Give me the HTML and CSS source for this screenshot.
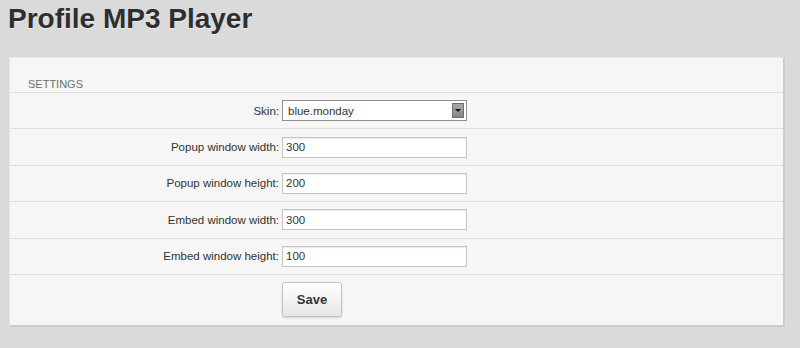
FILE: index.html
```html
<!DOCTYPE html>
<html lang="en">
<head>
    <meta charset="UTF-8">
    <title>Profile MP3 Player</title>
    <link rel="stylesheet" href="styles.css">
</head>
<body>
    <div class="page">
        <h1>Profile MP3 Player</h1>
        <form class="panel">
            <div class="panel-head">Settings</div>
            <div class="row">
                <label for="skin">Skin:</label>
                <div class="select-wrap">
                    <select id="skin" class="field select">
                        <option>blue.monday</option>
                    </select>
                    <span class="select-arrow"></span>
                </div>
            </div>
            <div class="row">
                <label for="popupWidth">Popup window width:</label>
                <input type="text" id="popupWidth" class="field" value="300">
            </div>
            <div class="row">
                <label for="popupHeight">Popup window height:</label>
                <input type="text" id="popupHeight" class="field" value="200">
            </div>
            <div class="row">
                <label for="embedWidth">Embed window width:</label>
                <input type="text" id="embedWidth" class="field" value="300">
            </div>
            <div class="row">
                <label for="embedHeight">Embed window height:</label>
                <input type="text" id="embedHeight" class="field" value="100">
            </div>
            <div class="row row-actions">
                <button type="button" class="btn">Save</button>
            </div>
        </form>
    </div>
</body>
</html>
```

FILE: styles.css
```css
body {
    margin: 0;
    padding: 0;
    font-family: 'Liberation Sans', Arial, sans-serif;
    background-color: #dadada;
    color: #333333;
}
.page {
    padding: 0 16px 0 9px;
}
h1 {
    margin: 3px 0 22px -1px;
    font-size: 28px;
    line-height: 32px;
    font-weight: bold;
    color: #2e2e2e;
    text-shadow: 0 1px 0 rgba(255, 255, 255, 0.6);
}
.panel {
    width: 773px;
    background-color: #f6f6f6;
    border: 1px solid #e6e6e6;
    border-right: 2px solid #cdcdcd;
    border-bottom: 2px solid #cdcdcd;
}
.panel-head {
    padding: 19px 18px 1px;
    font-size: 11px;
    line-height: 14px;
    text-transform: uppercase;
    color: #6f6f6f;
    border-bottom: 1px solid #dedede;
}
.row {
    display: flex;
    align-items: center;
    height: 35.4px;
    border-bottom: 1px solid #dedede;
}
.row label {
    width: 269px;
    padding-right: 3px;
    text-align: right;
    font-size: 11.5px;
    color: #333333;
}
.field {
    box-sizing: border-box;
    width: 185px;
    height: 21px;
    margin: 0;
    padding: 0 3px;
    border: 1px solid #c4c4c4;
    border-radius: 0;
    background-color: #ffffff;
    box-shadow: inset 0 1px 1px rgba(0, 0, 0, 0.08);
    font-family: 'Liberation Sans', Arial, sans-serif;
    font-size: 11.5px;
    color: #333333;
    outline: none;
}
.select-wrap {
    position: relative;
    display: flex;
}
.select {
    -webkit-appearance: none;
    appearance: none;
    padding-left: 5px;
    border-color: #8f8f8f;
    box-shadow: none;
}
.select-arrow {
    position: absolute;
    top: 3px;
    right: 3px;
    width: 12px;
    height: 15px;
    box-sizing: border-box;
    border: 1px solid #6f6f6f;
    background: linear-gradient(#a8a8a8, #858585);
    pointer-events: none;
}
.select-arrow::after {
    content: "";
    position: absolute;
    left: 2px;
    top: 5px;
    border-left: 3px solid transparent;
    border-right: 3px solid transparent;
    border-top: 3px solid #111111;
}
.row-actions {
    height: 50px;
    border-bottom: none;
    padding-left: 272px;
}
.btn {
    width: 60px;
    height: 35px;
    border: 1px solid #c2c2c2;
    border-radius: 3px;
    background: linear-gradient(#ffffff, #e6e6e6);
    box-shadow: 0 1px 2px rgba(0, 0, 0, 0.15);
    font-family: 'Liberation Sans', Arial, sans-serif;
    font-size: 13px;
    font-weight: bold;
    color: #333333;
    cursor: pointer;
}
.btn:hover {
    background: linear-gradient(#ffffff, #dcdcdc);
}
```
